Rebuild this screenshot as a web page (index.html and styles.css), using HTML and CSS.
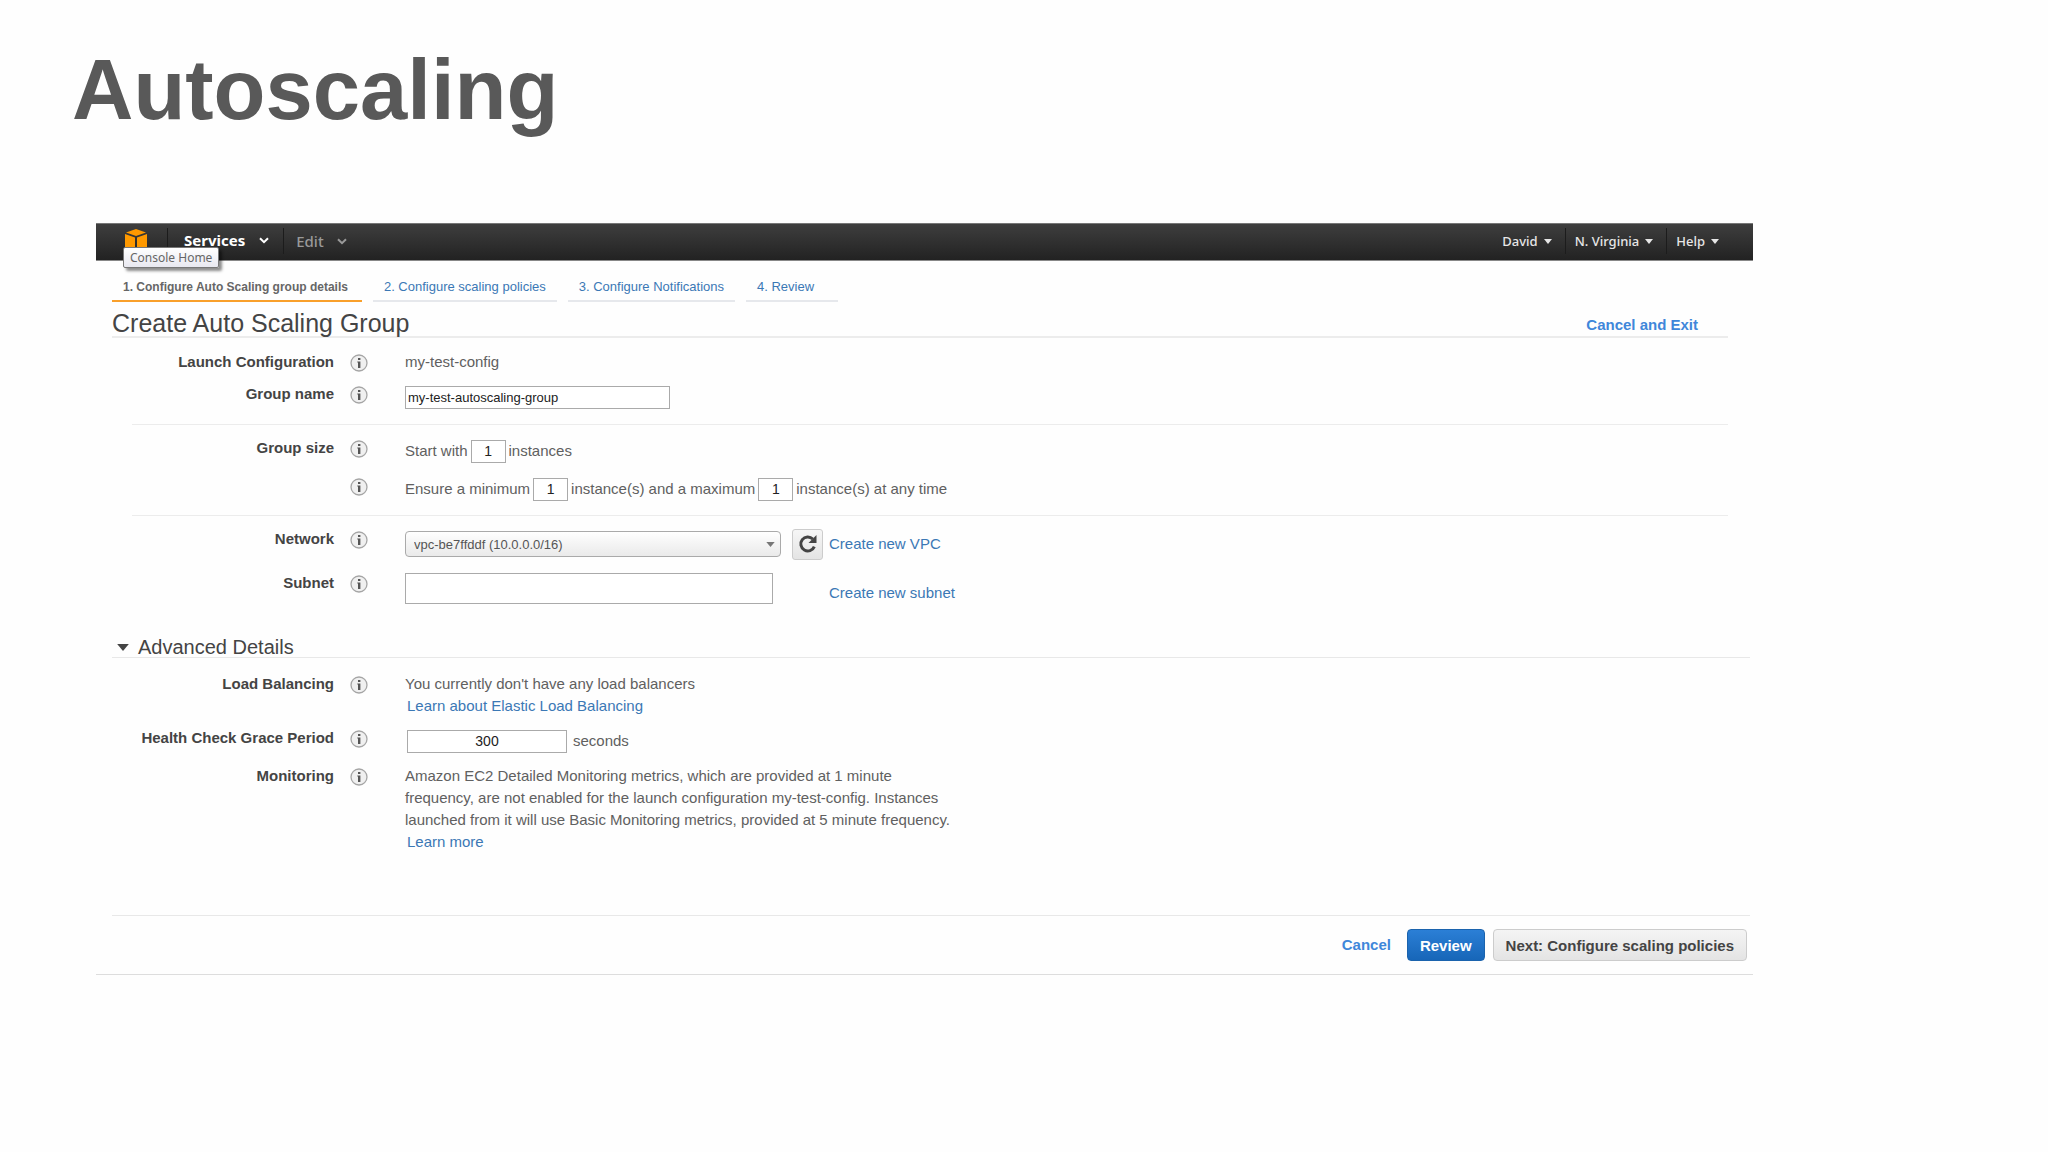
FILE: index.html
```html
<!DOCTYPE html>
<html lang="en">
<head>
    <meta charset="UTF-8">
    <meta name="viewport" content="width=device-width, initial-scale=1.0">
    <title>Autoscaling</title>
    <link rel="stylesheet" href="styles.css">
</head>
<body>

    <!-- Shared icons -->
    <svg class="sprite" aria-hidden="true">
        <symbol id="info" viewBox="0 0 18 18">
            <circle cx="9" cy="9" r="8" fill="#f0f0f0" stroke="#a5a5a5" stroke-width="1.3"/>
            <path d="M8 4h2.4v2H8zM7.3 7.4h3.1V14H8V8.4h-.7z" fill="#555"/>
        </symbol>
        <symbol id="chevron" viewBox="0 0 10 7">
            <path d="M1 1.2l4 4 4-4" fill="none" stroke="currentColor" stroke-width="2"/>
        </symbol>
        <symbol id="caret" viewBox="0 0 10 6">
            <path d="M0 0h10L5 6z" fill="currentColor"/>
        </symbol>
    </svg>

    <h1 class="slide-title">Autoscaling</h1>

    <div class="console">

        <!-- Navigation Bar -->
        <nav class="navbar">
            <a class="logo" href="#" aria-label="Console Home">
                <svg viewBox="0 0 22 24" width="22" height="24">
                    <path d="M1 3.6L11 0l10 3.6L11 7z" fill="#f90"/>
                    <path d="M0 5l10 3.4V24L0 20zM22 5L12 8.4V24l10-4z" fill="#f90"/>
                </svg>
                <span class="tooltip">Console Home</span>
            </a>
            <button class="nav-item services">Services <svg class="chevron"><use href="#chevron"/></svg></button>
            <button class="nav-item edit">Edit <svg class="chevron"><use href="#chevron"/></svg></button>
            <div class="nav-right">
                <button class="nav-item">David <svg class="caret"><use href="#caret"/></svg></button>
                <button class="nav-item">N. Virginia <svg class="caret"><use href="#caret"/></svg></button>
                <button class="nav-item">Help <svg class="caret"><use href="#caret"/></svg></button>
            </div>
        </nav>

        <!-- Wizard Steps -->
        <div class="steps">
            <a class="step active" href="#">1. Configure Auto Scaling group details</a>
            <a class="step" href="#">2. Configure scaling policies</a>
            <a class="step" href="#">3. Configure Notifications</a>
            <a class="step last" href="#">4. Review</a>
        </div>

        <div class="page-head">
            <h2>Create Auto Scaling Group</h2>
            <a class="strong-link" href="#">Cancel and Exit</a>
        </div>

        <form>
            <div class="section">
                <div class="row">
                    <span class="label">Launch Configuration</span>
                    <svg class="info"><use href="#info"/></svg>
                    <div class="text">my-test-config</div>
                </div>
                <div class="row">
                    <label class="label" for="group-name">Group name</label>
                    <svg class="info"><use href="#info"/></svg>
                    <div class="field"><input class="name-input" type="text" id="group-name" value="my-test-autoscaling-group"></div>
                </div>
            </div>

            <div class="section size">
                <div class="row">
                    <label class="label" for="start">Group size</label>
                    <svg class="info"><use href="#info"/></svg>
                    <div class="field">Start with <input class="count" type="text" id="start" value="1"> instances</div>
                </div>
                <div class="row">
                    <span class="label"></span>
                    <svg class="info"><use href="#info"/></svg>
                    <div class="field">
                        <label for="min">Ensure a minimum</label>
                        <input class="count" type="text" id="min" value="1">
                        <label for="max">instance(s) and a maximum</label>
                        <input class="count" type="text" id="max" value="1">
                        <span>instance(s) at any time</span>
                    </div>
                </div>
            </div>

            <div class="section network">
                <div class="row">
                    <label class="label" for="network">Network</label>
                    <svg class="info"><use href="#info"/></svg>
                    <div class="picker">
                        <div class="select-box">
                            <select id="network">
                                <option>vpc-be7ffddf (10.0.0.0/16)</option>
                            </select>
                            <svg class="select-caret"><use href="#caret"/></svg>
                        </div>
                        <button class="refresh" type="button" aria-label="Refresh">
                            <svg viewBox="0 0 20 20" width="20" height="20">
                                <path d="M16.3 12.6A7 7 0 1 1 14.8 5" fill="none" stroke="#444" stroke-width="3"/>
                                <path d="M18.5 1v8h-8z" fill="#444"/>
                            </svg>
                        </button>
                        <a href="#">Create new VPC</a>
                    </div>
                </div>
                <div class="row">
                    <label class="label" for="subnet">Subnet</label>
                    <svg class="info"><use href="#info"/></svg>
                    <div class="picker subnet">
                        <input class="subnet-input" type="text" id="subnet">
                        <a href="#">Create new subnet</a>
                    </div>
                </div>
            </div>

            <!-- Advanced Details -->
            <h3 class="advanced"><svg class="toggle"><use href="#caret"/></svg>Advanced Details</h3>

            <div class="section details">
                <div class="row">
                    <span class="label">Load Balancing</span>
                    <svg class="info"><use href="#info"/></svg>
                    <div class="text">
                        You currently don't have any load balancers<br>
                        <a class="learn" href="#">Learn about Elastic Load Balancing</a>
                    </div>
                </div>
                <div class="row">
                    <label class="label" for="grace">Health Check Grace Period</label>
                    <svg class="info"><use href="#info"/></svg>
                    <div class="field grace"><input class="grace-input" type="text" id="grace" value="300"> seconds</div>
                </div>
                <div class="row">
                    <span class="label">Monitoring</span>
                    <svg class="info"><use href="#info"/></svg>
                    <div class="text">
                        Amazon EC2 Detailed Monitoring metrics, which are provided at 1 minute<br>
                        frequency, are not enabled for the launch configuration my-test-config. Instances<br>
                        launched from it will use Basic Monitoring metrics, provided at 5 minute frequency.<br>
                        <a class="learn" href="#">Learn more</a>
                    </div>
                </div>
            </div>

            <div class="actions">
                <a class="strong-link" href="#">Cancel</a>
                <button class="btn primary" type="button">Review</button>
                <button class="btn" type="button">Next: Configure scaling policies</button>
            </div>
        </form>
    </div>

</body>
</html>
```
FILE: styles.css
```css
* {
    box-sizing: border-box;
}

body {
    margin: 0;
    background-color: #fefefe;
    color: #606060;
    font-family: "Liberation Sans", Arial, sans-serif;
    font-size: 15px;
    line-height: 22px;
}

button, input, select {
    font-family: inherit;
    margin: 0;
}

a {
    color: #3b78b5;
    text-decoration: none;
}

.sprite {
    display: block;
    width: 0;
    height: 0;
}

.slide-title {
    margin: 0;
    padding: 40px 72px 84px;
    font-size: 85px;
    line-height: 99px;
    color: #595959;
}

.console {
    margin: 0 295px 0 96px;
    border-bottom: 1px solid #ddd;
}

/* Navigation Bar */
.navbar {
    display: flex;
    height: 38px;
    padding-left: 28px;
    background: linear-gradient(#3e3e3e, #222);
    border-top: 1px solid #777;
    border-bottom: 1px solid #888;
}

.logo {
    position: relative;
    padding: 5px 20px 0 1px;
}

.logo svg {
    display: block;
}

.tooltip {
    position: absolute;
    top: 23px;
    left: -1px;
    padding: 0 6px;
    height: 21px;
    line-height: 19px;
    font-family: "Noto Sans", sans-serif;
    font-size: 12px;
    white-space: nowrap;
    color: #666;
    background: linear-gradient(#fff, #e8e8f0);
    border: 1px solid #777;
    border-radius: 2px;
    box-shadow: 3px 3px 3px rgba(0, 0, 0, 0.45);
}

.nav-item {
    display: flex;
    align-items: center;
    align-self: flex-start;
    height: 26px;
    margin-top: 4px;
    padding: 0 13px 0 9px;
    gap: 6px;
    border: none;
    border-left: 1px solid #1c1c1c;
    background: none;
    color: #e6e6e6;
    font-family: "Noto Sans", sans-serif;
    font-size: 13px;
    font-weight: 500;
}

.services {
    padding: 0 14px 2px 16px;
    gap: 14px;
    color: #fff;
    font-size: 15px;
    font-weight: bold;
}

.edit {
    padding-left: 12px;
    gap: 13px;
    color: #999;
    font-size: 15px;
}

.chevron {
    width: 10px;
    height: 7px;
}

.caret {
    width: 8px;
    height: 5px;
}

.nav-right {
    display: flex;
    margin-left: auto;
    padding-right: 21px;
}

.nav-right .nav-item:first-child {
    border-left: none;
}

/* Wizard Steps */
.steps {
    display: flex;
    gap: 11px;
    padding-left: 16px;
    margin-top: 14px;
}

.step {
    padding: 1px 11px 2px;
    border-bottom: 2px solid #e6e8ec;
    font-size: 13px;
}

.step.active {
    padding-right: 14px;
    border-bottom: 2px solid #f9a02b;
    color: #666;
    font-size: 12px;
    font-weight: bold;
}

.step.last {
    padding-right: 24px;
}

.page-head {
    display: flex;
    justify-content: space-between;
    align-items: flex-end;
    height: 36px;
    margin: 0 25px 0 16px;
    padding-right: 30px;
    border-bottom: 2px solid #ececec;
}

.page-head h2 {
    margin: 0;
    font-size: 25px;
    font-weight: normal;
    line-height: 26px;
    color: #444;
}

.strong-link {
    color: #3f87da;
    font-weight: bold;
}

/* Form */
.section {
    display: flex;
    flex-direction: column;
    gap: 10px;
    margin: 0 25px 0 36px;
    padding: 13px 0 13px;
    border-bottom: 1px solid #ececec;
}

.section.size {
    padding: 12px 0;
}

.section.network {
    padding: 12px 0;
    gap: 12px;
    border-bottom: none;
}

.section.details {
    padding: 15px 0 62px;
    margin-right: 3px;
    border-bottom: none;
}

.row {
    display: grid;
    grid-template-columns: 202px 18px 1fr;
    column-gap: 16px;
    align-items: start;
}

.label {
    color: #444;
    font-weight: bold;
    text-align: right;
}

.info {
    width: 18px;
    height: 18px;
    margin-top: 3px;
}

.text, .field, .picker {
    margin-left: 21px;
}

.field {
    display: flex;
    align-items: center;
    gap: 3px;
    height: 28px;
}

.learn {
    margin-left: 2px;
}

input {
    height: 23px;
    padding: 0 2px;
    border: 1px solid #aaa;
    background-color: #fff;
    color: #222;
    font-size: 14px;
}

.name-input {
    width: 265px;
    font-size: 13px;
}

.count {
    width: 35px;
    text-align: center;
}

.grace {
    gap: 6px;
    padding-left: 2px;
}

.grace-input {
    width: 160px;
    text-align: center;
}

.picker {
    display: grid;
    grid-template-columns: 387px 37px 1fr;
    align-items: center;
    height: 32px;
}

.subnet .subnet-input {
    grid-column: 1;
    width: 368px;
    height: 31px;
}

.subnet a {
    grid-column: 3;
    align-self: end;
}

.select-box {
    position: relative;
    width: 376px;
}

.select-box select {
    display: block;
    appearance: none;
    width: 100%;
    height: 26px;
    padding: 0 8px;
    border: 1px solid #aaa;
    border-radius: 4px;
    background: linear-gradient(#fff, #f4f4f4 50%, #eaeaea);
    color: #555;
    font-size: 13px;
}

.select-caret {
    position: absolute;
    right: 6px;
    top: 11px;
    width: 9px;
    height: 5px;
    color: #777;
    pointer-events: none;
}

.refresh {
    display: flex;
    align-items: center;
    justify-content: center;
    width: 31px;
    height: 31px;
    padding: 0;
    border: 1px solid #ccc;
    border-radius: 3px;
    background: linear-gradient(#f6f6f6, #e4e4e4);
}

/* Advanced Details */
.advanced {
    display: flex;
    align-items: center;
    gap: 9px;
    margin: 21px 3px 0 16px;
    padding-left: 5px;
    border-bottom: 1px solid #e8e8e8;
    font-size: 20px;
    font-weight: normal;
    line-height: 20px;
    color: #444;
}

.toggle {
    width: 12px;
    height: 7px;
}

/* Footer Buttons */
.actions {
    display: flex;
    justify-content: flex-end;
    align-items: center;
    gap: 8px;
    margin: 0 3px 0 16px;
    padding: 13px 3px;
    border-top: 1px solid #e8e8e8;
}

.actions .strong-link {
    margin-right: 8px;
}

.btn {
    height: 32px;
    padding: 0 12px;
    border: 1px solid #ccc;
    border-radius: 4px;
    background: linear-gradient(#f4f4f4, #e4e4e4);
    color: #444;
    font-size: 15px;
    font-weight: bold;
}

.btn.primary {
    border-color: #1b63ad;
    background: linear-gradient(#2b7fd6, #1766b8);
    color: #fff;
}
```
